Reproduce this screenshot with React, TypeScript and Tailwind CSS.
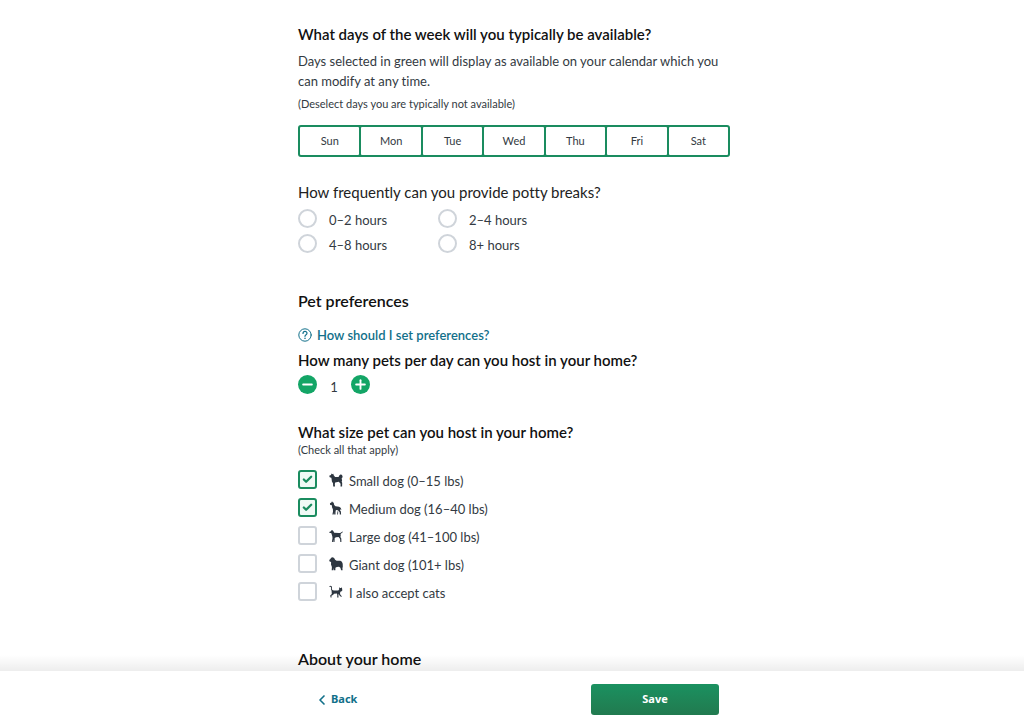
import React, { useState } from 'react'
import { Check, ChevronLeft, Minus, Plus } from 'lucide-react'

const days = ['Sun', 'Mon', 'Tue', 'Wed', 'Thu', 'Fri', 'Sat']

const breaks = ['0–2 hours', '2–4 hours', '4–8 hours', '8+ hours']

const sizes = [
  {
    id: 'small',
    label: 'Small dog (0–15 lbs)',
    checked: true,
    path: 'M.2 2.8 1.9 2l.7-1.6.9.8.8-.5.4 1.6 1.4 1.6 3.5.1.5-1.2 1.2-1.2 1.5.2.8 1.4-.3 1.6-.7.6.5 1.8-.4 1.4.5 1.4-.1 3.4h-1.6l.1-2.6-1.8-2-3.6.6-.4 1.5.2 2.5H4.2L4 10.3 2.9 8.4 2.6 6 2.3 4.7.7 4.3z',
  },
  {
    id: 'medium',
    label: 'Medium dog (16–40 lbs)',
    checked: true,
    path: 'M.9 2.2 2.4 1.5 3 .2l.7 1 1 .5.5 2.4 1.3 1.1 3.6.5 1.5 1 .8 1.8-.5.6-.7-1.1-.2 1.3.9 1.3.2 2.9h-1.3l-.2-2.3-1.5-1.6-.7 1.5-.2 2.4H9l.2-2.6-.3-1.6-2-.2-.4 1.9v2.5H5.2l-.1-2.3-.4 2.3H3.4l.6-3-.1-2.2-.9-2-.1-2-1.7-.3z',
  },
  {
    id: 'large',
    label: 'Large dog (41–100 lbs)',
    checked: false,
    path: 'M.3 2.9 1.9 2.2 2.7 1l1.2.5.8 1.2.5 1.1 4.6.3 1.4-.2L13.6 2.5l.3.6-2.3 2 .1 1.7-.3 1.3.9 1.5.1 3.4h-1.1l-.2-2.9-1.5-2-2.6.1-1.3.8-.2 4H4.4l-.1-2.4-.5 2.4H2.9l.6-3.7-.2-2L2.6 5l-.4-1-1.6-.1z',
  },
  {
    id: 'giant',
    label: 'Giant dog (101+ lbs)',
    checked: false,
    path: 'M.2 2.9 1.4 1.9 2.1.7 3.7.3l1.4.8 1 1.7 1.5.9 3.7.1 1.6 1 .8 1.9.1 3.4-.4 1 .2 2.2h-1.5l-.7-2.5-1.4-1.1-2.2.2-1.4.9v2.5H4.8l-.1-2.2-.5 2.2H2.7l.2-3.3L2 7.6l.1-2.7-1.5-.4z',
  },
  {
    id: 'cats',
    label: 'I also accept cats',
    checked: false,
    path: 'M2.6 5.7 1.9 4.2 2.1 2.5l-.6-.7-1 .3-.3-.7 1.2-.6 1.3.5.3 1.3-.2 1.5.6.9 1.4.4 4.4 0 1-.9-.1-2.2 1 .7h1l.8-.8.3 2.2.2.9-.8.9-1.2.5-.4 1.5.4 1.5 1.4 1.5-.6.7-1.7-1.5-.8-1.6-.3 1.4.1 2.2H8.2l.1-2.5-.4-1.3-2.9.1-1 1.3-1.6.8.2 1.6h-1l-.4-1.9 1.6-1.5z',
  },
]

const DayPicker = () => (
  <div className="mt-[13px] grid grid-cols-7 gap-[2px] rounded-[3px] border-2 border-[#1a8c5f] bg-[#1a8c5f]">
    {days.map((day) => (
      <button key={day} type="button" className="h-7 rounded-[1px] bg-white text-[11px] text-[#333a42]">
        {day}
      </button>
    ))}
  </div>
)

const HelpIcon = () => (
  <svg viewBox="0 0 14 14" className="size-[14px]" fill="none" stroke="currentColor" strokeLinecap="round">
    <circle cx="7" cy="7" r="6.2" />
    <path d="M5 5.4C5.1 2.7 9 2.7 9 5.3 9 6.8 7 6.5 7 8.3" strokeWidth="1.2" />
    <path d="M7 10.3v.1" strokeWidth="1.4" />
  </svg>
)

const App = () => {
  const [pets, setPets] = useState(1)

  return (
    <div className="flex min-h-screen flex-col bg-white font-[Lato,sans-serif] text-[#333a42] [font-variant-ligatures:none]">
      <main className="mx-auto w-full max-w-[436px] flex-1 pt-6 pl-1">
        {/* Availability */}
        <section>
          <h3 className="text-[15px] leading-5 font-semibold text-[#111]">What days of the week will you typically be available?</h3>
          <p className="mt-[7px] text-[13px] leading-5">
            Days selected in green will display as available on your calendar which you can modify at any time.
          </p>
          <p className="mt-[5px] text-[11px] leading-4">(Deselect days you are typically not available)</p>
          <DayPicker />
        </section>

        {/* Potty breaks */}
        <fieldset className="mt-[25px]">
          <legend className="text-[15px] leading-5 text-[#222]">How frequently can you provide potty breaks?</legend>
          <div className="mt-[7px] grid w-[280px] grid-cols-2 gap-y-[5px]">
            {breaks.map((item) => (
              <label key={item} className="flex h-5 items-start gap-3 text-[13px] leading-[22px]">
                <input type="radio" name="breaks" className="size-[19px] appearance-none rounded-full border-2 border-[#cfd4da] bg-white checked:border-[#1a8c5f]" />
                {item}
              </label>
            ))}
          </div>
        </fieldset>

        {/* Pet preferences */}
        <section className="mt-[35px]">
          <h2 className="text-[16px] leading-6 font-semibold text-[#111]">Pet preferences</h2>
          <a href="#preferences" className="mt-3 flex w-fit items-center gap-[5px] text-[13px] leading-5 font-semibold text-[#12708a]">
            <HelpIcon />
            How should I set preferences?
          </a>
          <h3 className="mt-[5px] text-[15px] leading-5 font-semibold text-[#111]">How many pets per day can you host in your home?</h3>
          <div className="mt-[5px] flex h-5 items-start text-[13px] leading-6">
            <button type="button" aria-label="Fewer pets" onClick={() => setPets(Math.max(1, pets - 1))} className="flex size-[19px] items-center justify-center rounded-full bg-[#13a566] text-white">
              <Minus className="size-[15px]" strokeWidth={3} />
            </button>
            <span className="w-[34px] text-center">{pets}</span>
            <button type="button" aria-label="More pets" onClick={() => setPets(pets + 1)} className="flex size-[19px] items-center justify-center rounded-full bg-[#13a566] text-white">
              <Plus className="size-[15px]" strokeWidth={3} />
            </button>
          </div>
        </section>

        {/* Pet sizes */}
        <fieldset className="mt-[27px]">
          <legend className="text-[15px] leading-5 font-semibold text-[#111]">What size pet can you host in your home?</legend>
          <p className="text-[11px] leading-4">(Check all that apply)</p>
          <div className="mt-3 flex flex-col gap-2">
            {sizes.map((size) => (
              <label key={size.id} className="flex h-5 w-fit items-start text-[13px] leading-[22px]">
                <span className="grid size-[19px] place-items-center">
                  <input
                    type="checkbox"
                    defaultChecked={size.checked}
                    className="peer col-start-1 row-start-1 size-[19px] appearance-none rounded-[3px] border-2 border-[#cfd4da] bg-white checked:border-[#1a8c5f] checked:bg-[#effaf5]"
                  />
                  <Check className="pointer-events-none invisible col-start-1 row-start-1 size-[11px] text-[#1a8c5f] peer-checked:visible" strokeWidth={5} />
                </span>
                <svg viewBox="0 0 14 14" className="mr-[6px] ml-3 size-[14px] self-center" fill="#2d3640">
                  <path d={size.path} />
                </svg>
                {size.label}
              </label>
            ))}
          </div>
        </fieldset>

        <h2 className="mt-[45px] text-[16px] leading-6 font-semibold text-[#111]">About your home</h2>
      </main>

      {/* Footer */}
      <footer className="sticky bottom-0 bg-white">
        <div className="pointer-events-none absolute inset-x-0 bottom-full h-4 bg-linear-to-b from-black/0 to-black/7" />
        <div className="mx-auto flex max-w-[436px] items-center justify-between pt-[13px] pr-[11px] pb-[11px] pl-5 font-['Noto_Sans',sans-serif] text-[11px] font-bold">
          <button type="button" className="flex items-center gap-px text-[#12708a]">
            <ChevronLeft className="size-4" strokeWidth={2.5} />
            Back
          </button>
          <button type="submit" className="h-[31px] w-32 rounded-[3px] bg-linear-to-b from-[#1a9160] to-[#217a4f] text-white">
            Save
          </button>
        </div>
      </footer>
    </div>
  )
}

export default App
